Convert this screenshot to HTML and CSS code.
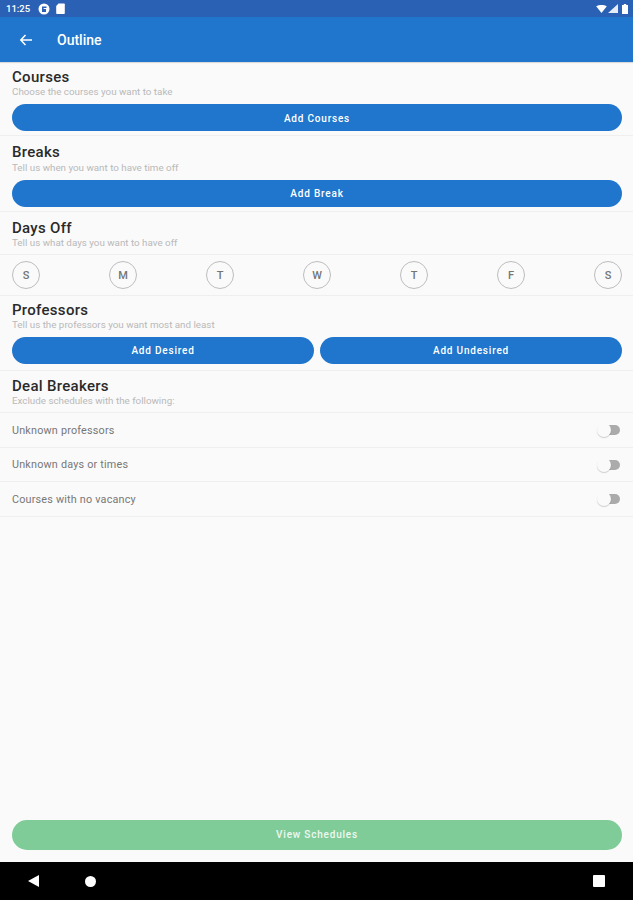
FILE: index.html
```html
<!DOCTYPE html>
<html lang="en">
<head>
<meta charset="UTF-8" />
<meta name="viewport" content="width=device-width, initial-scale=1" />
<title>Outline</title>
<link rel="stylesheet" href="styles.css">
</head>
<body>

<!-- Status bar -->
<div class="status-bar">
  <span class="status-time">11:25</span>
  <svg class="status-icon" width="12" height="12" viewBox="0 0 12 12"><circle cx="6" cy="6" r="5.5" fill="#fff"/><path d="M4 3.5h4.5v1.6H5.6v1H8V9H4z" fill="#2b61b4"/></svg>
  <svg class="status-icon" width="9" height="11" viewBox="0 0 9 11"><path d="M2.5 0.5H8a.8.8 0 0 1 .8.8v8.9a.8.8 0 0 1-.8.8H1a.8.8 0 0 1-.8-.8V3z" fill="#fff"/></svg>
  <span class="status-right">
    <svg width="11" height="8" viewBox="0 0 12 9"><path d="M0 1.5C3.5-.5 8.500-.5 12 1.500L6 9z" fill="#fff"/></svg>
    <svg width="10" height="9" viewBox="0 0 10 9"><path d="M10 0v9H0z" fill="#e6ecf6"/></svg>
    <svg class="status-battery" width="6" height="10" viewBox="0 0 6 10"><path d="M1.800 0h2.400v1H6v9H0V1h1.800z" fill="#fff"/></svg>
  </span>
</div>

<!-- App bar -->
<header class="app-bar">
  <svg class="back-arrow" width="14" height="14" viewBox="0 0 14 14"><path d="M13 7H2M6.500 2 1.800 7l4.700 5" fill="none" stroke="#fff" stroke-width="1.500"/></svg>
  <span class="app-title">Outline</span>
</header>

<main class="content">
  <section class="section section-first">
    <h2>Courses</h2>
    <p class="hint">Choose the courses you want to take</p>
    <div class="btn-row"><button class="pill">Add Courses</button></div>
  </section>

  <section class="section section-breaks">
    <h2>Breaks</h2>
    <p class="hint">Tell us when you want to have time off</p>
    <div class="btn-row"><button class="pill">Add Break</button></div>
  </section>

  <section class="section section-head">
    <h2>Days Off</h2>
    <p class="hint">Tell us what days you want to have off</p>
  </section>
  <div class="days">
    <span class="day">S</span>
    <span class="day">M</span>
    <span class="day">T</span>
    <span class="day">W</span>
    <span class="day">T</span>
    <span class="day">F</span>
    <span class="day">S</span>
  </div>

  <section class="section section-professors">
    <h2>Professors</h2>
    <p class="hint">Tell us the professors you want most and least</p>
    <div class="btn-row">
      <button class="pill">Add Desired</button>
      <button class="pill">Add Undesired</button>
    </div>
  </section>

  <section class="section section-deal">
    <h2>Deal Breakers</h2>
    <p class="hint">Exclude schedules with the following:</p>
  </section>
  <div class="toggle-row"><span>Unknown professors</span><span class="toggle"></span></div>
  <div class="toggle-row"><span>Unknown days or times</span><span class="toggle"></span></div>
  <div class="toggle-row"><span>Courses with no vacancy</span><span class="toggle"></span></div>

  <button class="pill view-btn">View Schedules</button>
</main>

<!-- Navigation bar -->
<nav class="nav-bar">
  <svg width="11" height="12" viewBox="0 0 11 12"><path d="M11 0v12L0 6z" fill="#fff"/></svg>
  <span class="nav-home"></span>
  <span class="nav-square"></span>
</nav>

</body>
</html>
```

FILE: styles.css
```css
/* --- Basic Reset & Fonts --- */
* {
  box-sizing: border-box;
}
body {
  margin: 0;
  height: 900px;
  display: flex;
  flex-direction: column;
  font-family: Roboto, sans-serif;
  background: #fafafa;
  overflow: hidden;
}

/* --- Status bar --- */
.status-bar {
  height: 17px;
  flex: none;
  display: flex;
  align-items: center;
  padding: 0 5px 0 6px;
  background: #2b61b4;
  color: #fff;
}
.status-time {
  font-size: 9.500px;
  font-weight: 500;
  width: 32px;
}
.status-icon {
  margin-right: 6px;
}
.status-right {
  margin-left: auto;
  display: flex;
  align-items: center;
  gap: 1px;
}
.status-battery {
  margin-left: 3px;
}

/* --- App bar --- */
.app-bar {
  height: 45px;
  flex: none;
  display: flex;
  align-items: center;
  padding-left: 19px;
  background: #1f76cc;
  box-shadow: 0 1px 1px rgba(0, 0, 0, 0.12);
}
.back-arrow {
  margin-right: 24px;
}
.app-title {
  color: #fff;
  font-size: 14px;
  font-weight: 500;
}

/* --- Sections --- */
.content {
  flex: 1;
  display: flex;
  flex-direction: column;
}
.section {
  padding: 7px 11px 4px 12px;
  border-bottom: 1px solid #efefef;
}
.section-first {
  padding-top: 6px;
}
.section-head {
  padding-bottom: 5px;
}
.section-professors {
  padding-top: 5px;
  padding-bottom: 6px;
}
.section-deal {
  padding-top: 6px;
  padding-bottom: 5px;
}
.section h2 {
  margin: 0;
  font-size: 15px;
  line-height: 18px;
  font-weight: 500;
  color: #2a2a2a;
  letter-spacing: 0.3px;
}
.hint {
  margin: 0;
  font-size: 9.800px;
  line-height: 12px;
  color: #b9b9b9;
}
.section-breaks .hint {
  margin-top: 1px;
}
.btn-row {
  display: flex;
  gap: 6px;
  margin-top: 6px;
}

/* --- Buttons --- */
.pill {
  flex: 1;
  height: 27px;
  border: none;
  border-radius: 14px;
  background: #1f76cc;
  color: #fff;
  font-family: Roboto, sans-serif;
  font-size: 10px;
  font-weight: 500;
  letter-spacing: 0.8px;
}
.section-first .pill {
  padding-top: 2px;
}
.view-btn {
  flex: none;
  height: 30px;
  border-radius: 15px;
  margin: auto 11px 12px 12px;
  padding-bottom: 2px;
  background: #7fcc98;
  color: #eef8f1;
}

/* --- Days Off --- */
.days {
  height: 41px;
  display: flex;
  justify-content: space-between;
  align-items: flex-start;
  padding: 6px 11px 0 12px;
  border-bottom: 1px solid #efefef;
}
.day {
  width: 28px;
  height: 28px;
  display: flex;
  align-items: center;
  justify-content: center;
  border: 1px solid #bdbdbd;
  border-radius: 50%;
  font-size: 11px;
  font-weight: 500;
  color: #757575;
}

/* --- Deal breaker rows --- */
.toggle-row {
  height: 34.500px;
  display: flex;
  align-items: center;
  justify-content: space-between;
  padding: 1px 13px 0 12px;
  border-bottom: 1px solid #efefef;
  font-size: 10.800px;
  color: #777;
  letter-spacing: 0.2px;
}
.toggle {
  position: relative;
  width: 20px;
  height: 10px;
  border-radius: 5px;
  background: #ababab;
}
.toggle::after {
  content: "";
  position: absolute;
  left: -3px;
  top: -2px;
  width: 14px;
  height: 14px;
  border-radius: 50%;
  background: #fafafa;
  box-shadow: 0 1px 1px rgba(0, 0, 0, 0.18);
}

/* --- Navigation bar --- */
.nav-bar {
  height: 38px;
  flex: none;
  display: flex;
  align-items: center;
  padding: 0 28px;
  background: #000;
}
.nav-home {
  width: 11px;
  height: 11px;
  margin-left: 46px;
  border-radius: 50%;
  background: #fff;
}
.nav-square {
  width: 12px;
  height: 12px;
  margin-left: auto;
  border-radius: 1px;
  background: #fff;
}
```
